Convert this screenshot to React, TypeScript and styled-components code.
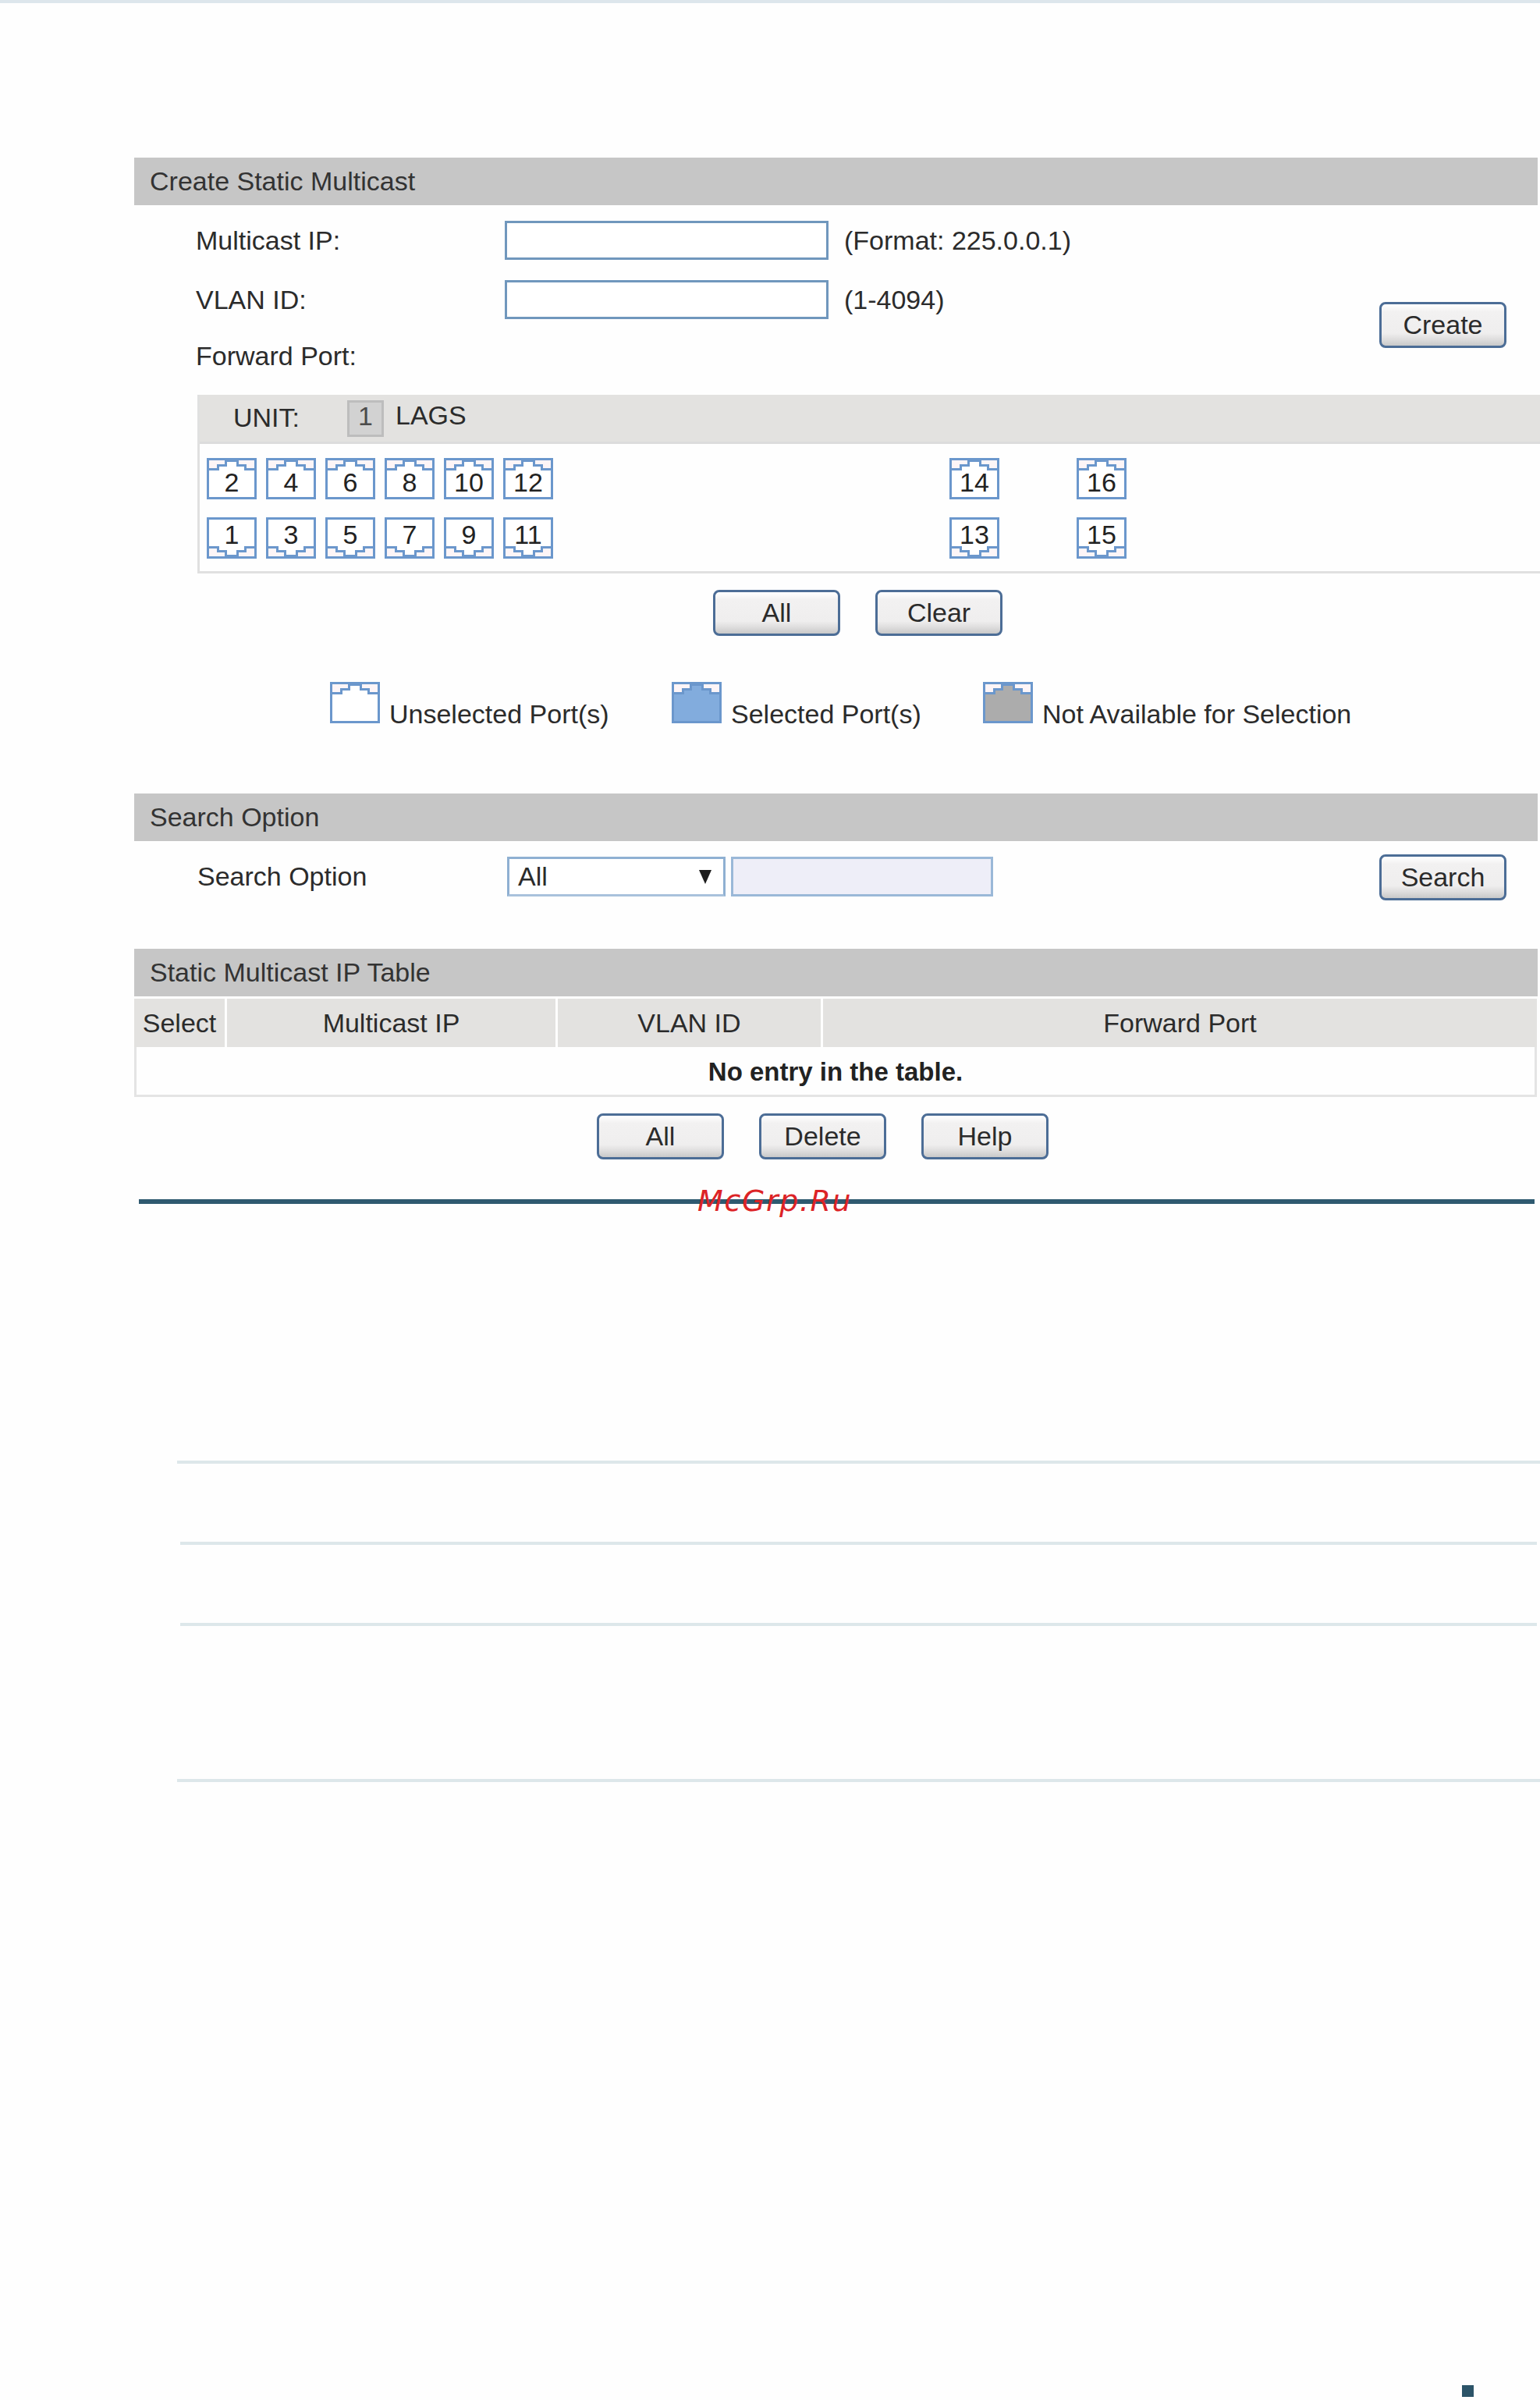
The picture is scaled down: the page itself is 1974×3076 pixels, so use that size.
import * as React from 'react';
import styled, { createGlobalStyle } from 'styled-components';

const GlobalStyle = createGlobalStyle`
  html, body {
    margin: 0;
    padding: 0;
    background: #fefefe;
  }
  * {
    box-sizing: border-box;
  }
`;

const textColor = '#2b2b2b';
const portBlue = '#6b97cc';

const Page = styled.div`
  position: relative;
  width: 1974px;
  height: 3076px;
  display: flex;
  flex-direction: column;
  overflow: hidden;
  font-family: "Liberation Sans", Arial, sans-serif;
  font-size: 34px;
  color: ${textColor};
  background: #fefefe;
`;

const TopStrip = styled.div`
  height: 4px;
  background: #dde6ec;
`;

const Content = styled.div`
  display: flex;
  flex-direction: column;
  margin-left: 172px;
`;

const SectionBar = styled.div<{ $top: number }>`
  width: 1799px;
  height: 61px;
  margin-top: ${p => p.$top}px;
  padding-left: 20px;
  display: flex;
  align-items: center;
  background: #c6c6c6;
  color: #333;
`;

const CreateForm = styled.div`
  display: flex;
  padding: 20px 43px 0 79px;
`;

const FormFields = styled.div`
  display: flex;
  flex-direction: column;
  gap: 26px;
`;

const FormRow = styled.div<{ $height?: number }>`
  display: flex;
  align-items: center;
  height: ${p => p.$height || 50}px;
`;

const FieldLabel = styled.div`
  width: 396px;
`;

const TextField = styled.input<{ $width?: number }>`
  width: ${p => p.$width || 415}px;
  height: 50px;
  padding: 0;
  border: 3px solid #7097bd;
  background: #fff;
  outline: 0;
`;

const FieldNote = styled.div`
  margin-left: 20px;
`;

const FormButton = styled.button<{ $top?: number }>`
  flex: none;
  width: 163px;
  height: 59px;
  margin-top: ${p => p.$top || 0}px;
  padding: 0;
  border: 3px solid #4c6d96;
  border-radius: 8px;
  background: linear-gradient(#ffffff, #f2f1f1 18%, #efeeee 70%, #dedddd 85%, #c9c9c9);
  font: inherit;
  color: ${textColor};
`;

const CreateAction = styled(FormButton)`
  margin-left: auto;
`;

const PortPanel = styled.div`
  width: 1721px;
  height: 229px;
  margin: 29px 0 0 81px;
  border: solid #e0e0e0;
  border-width: 0 0 3px 3px;
`;

const UnitBar = styled.div`
  height: 63px;
  display: flex;
  align-items: center;
  padding-left: 43px;
  background: #e3e2e0;
  border-bottom: 3px solid #dcdcdc;
`;

const UnitLabel = styled.div`
  width: 146px;
  padding-bottom: 2px;
`;

const UnitTab = styled.div`
  width: 47px;
  height: 47px;
  display: flex;
  align-items: center;
  justify-content: center;
  margin-right: 15px;
  padding-bottom: 5px;
  background: #d2d2d2;
  border: 3px solid #bdbdbd;
  color: #4c4c4c;
`;

const LagsLink = styled.span`
  padding-bottom: 7px;
`;

const PortBody = styled.div`
  display: flex;
  padding: 18px 0 0 9px;
`;

const PortGroup = styled.div<{ $columns: number; $gap: number; $left?: number }>`
  display: grid;
  grid-template-columns: repeat(${p => p.$columns}, 64px);
  column-gap: ${p => p.$gap}px;
  row-gap: 23px;
  margin-left: ${p => p.$left || 0}px;
`;

const PortBox = styled.div`
  position: relative;
  width: 64px;
  height: 53px;
  display: flex;
  justify-content: center;
  align-items: center;
`;

const PortNumber = styled.span<{ $flip: boolean }>`
  position: relative;
  margin-top: ${p => (p.$flip ? -10 : 9)}px;
  line-height: 1;
  font-size: 34px;
  color: #222;
`;

const PortSvg = styled.svg`
  position: absolute;
  top: 0;
  left: 0;
`;

const ActionRow = styled.div<{ $top: number; $gap: number; $left: number }>`
  display: flex;
  gap: ${p => p.$gap}px;
  margin: ${p => p.$top}px 0 0 ${p => p.$left}px;
`;

const Legend = styled.div`
  display: flex;
  margin: 59px 0 0 251px;
`;

const LegendItem = styled.div<{ $width: number }>`
  display: flex;
  width: ${p => p.$width}px;
`;

const LegendText = styled.div`
  margin: 21px 0 0 12px;
  line-height: 40px;
  white-space: nowrap;
`;

const SearchRow = styled.div`
  display: flex;
  align-items: flex-start;
  padding: 17px 43px 0 81px;
`;

const SearchLabel = styled.div`
  width: 397px;
  height: 50px;
  margin-top: 3px;
  line-height: 50px;
`;

const SelectBox = styled.div`
  width: 280px;
  height: 51px;
  margin: 3px 7px 0 0;
  display: flex;
  align-items: center;
  justify-content: space-between;
  padding: 0 15px 0 11px;
  background: #fff;
  border: 3px solid #8fb0d2;
  border-bottom-color: #a9c2dc;
`;

const SelectArrow = styled.span`
  width: 0;
  height: 0;
  border-left: 8px solid transparent;
  border-right: 8px solid transparent;
  border-top: 18px solid #1c1c1c;
`;

const SearchField = styled.input`
  width: 336px;
  height: 51px;
  margin-top: 3px;
  padding: 0;
  border: 3px solid #9ab8d8;
  background: #eeeef8;
  outline: 0;
`;

const TableHead = styled.div`
  display: grid;
  grid-template-columns: 116px 421px 337px 1fr;
  column-gap: 3px;
  width: 1798px;
  height: 62px;
  margin-top: 3px;
`;

const HeadCell = styled.div`
  display: flex;
  align-items: center;
  justify-content: center;
  background: #e3e2e0;
`;

const EmptyRow = styled.div`
  width: 1798px;
  height: 64px;
  display: flex;
  align-items: center;
  justify-content: center;
  padding-top: 2px;
  border: solid #e4e4e4;
  border-width: 0 3px 3px 3px;
  font-size: 33px;
  font-weight: 700;
  color: #222;
`;

const DarkRule = styled.div`
  width: 1789px;
  height: 6px;
  margin: 51px 0 0 6px;
  background: #2f5a70;
`;

const Watermark = styled.div`
  position: absolute;
  left: 894px;
  top: 1517px;
  font-family: "DejaVu Sans", sans-serif;
  font-style: italic;
  font-size: 38px;
  line-height: 44px;
  letter-spacing: 1.6px;
  color: #dc2326;
`;

const NoteRule = styled.div<{ $top: number; $left: number; $right: number }>`
  height: 4px;
  margin: ${p => p.$top}px ${p => p.$right}px 0 ${p => p.$left}px;
  background: #dde7ea;
`;

const PageMark = styled.div`
  width: 15px;
  height: 15px;
  margin: auto 0 4px 1874px;
  background: #2c5468;
`;

interface IPortIconProps {
  fill?: string;
  flip?: boolean;
}

// rj45 socket outline, the notch points up unless flipped
const PortIcon = ({ fill = '#ffffff', flip = false }: IPortIconProps) => (
  <PortSvg width="64" height="53" viewBox="0 0 64 53">
    <g transform={flip ? 'matrix(1 0 0 -1 0 53)' : undefined}>
      <rect x="1.5" y="1.5" width="61" height="50" fill={fill} stroke={portBlue} strokeWidth="3" />
      <path d="M3 3H23V8H13V13H3Z M41 3H61V13H51V8H41Z" fill="#fdf5f7" />
      <path
        d="M2 14.5H14.5V9.5H24.5V3.5H39.5V9.5H49.5V14.5H62"
        fill="none"
        stroke={portBlue}
        strokeWidth="3"
      />
    </g>
  </PortSvg>
);

const Port = ({ n, flip }: { n: number; flip: boolean }) => (
  <PortBox>
    <PortIcon flip={flip} />
    <PortNumber $flip={flip}>{n}</PortNumber>
  </PortBox>
);

const leftPorts = [2, 4, 6, 8, 10, 12, 1, 3, 5, 7, 9, 11];
const rightPorts = [14, 16, 13, 15];

const App = () => (
  <Page>
    <GlobalStyle />
    <TopStrip />
    <Content>
      <SectionBar $top={198}>Create Static Multicast</SectionBar>
      <CreateForm>
        <FormFields>
          <FormRow>
            <FieldLabel>Multicast IP:</FieldLabel>
            <TextField />
            <FieldNote>(Format: 225.0.0.1)</FieldNote>
          </FormRow>
          <FormRow>
            <FieldLabel>VLAN ID:</FieldLabel>
            <TextField />
            <FieldNote>(1-4094)</FieldNote>
          </FormRow>
          <FormRow $height={42}>
            <FieldLabel>Forward Port:</FieldLabel>
          </FormRow>
        </FormFields>
        <CreateAction $top={104}>Create</CreateAction>
      </CreateForm>
      <PortPanel>
        <UnitBar>
          <UnitLabel>UNIT:</UnitLabel>
          <UnitTab>1</UnitTab>
          <LagsLink>LAGS</LagsLink>
        </UnitBar>
        <PortBody>
          <PortGroup $columns={6} $gap={12}>
            {leftPorts.map((n, i) => <Port key={n} n={n} flip={i >= 6} />)}
          </PortGroup>
          <PortGroup $columns={2} $gap={99} $left={508}>
            {rightPorts.map((n, i) => <Port key={n} n={n} flip={i >= 2} />)}
          </PortGroup>
        </PortBody>
      </PortPanel>
      <ActionRow $top={21} $gap={45} $left={742}>
        <FormButton>All</FormButton>
        <FormButton>Clear</FormButton>
      </ActionRow>
      <Legend>
        <LegendItem $width={438}>
          <PortBox><PortIcon /></PortBox>
          <LegendText>Unselected Port(s)</LegendText>
        </LegendItem>
        <LegendItem $width={399}>
          <PortBox><PortIcon fill="#82acdd" /></PortBox>
          <LegendText>Selected Port(s)</LegendText>
        </LegendItem>
        <LegendItem $width={480}>
          <PortBox><PortIcon fill="#acacac" /></PortBox>
          <LegendText>Not Available for Selection</LegendText>
        </LegendItem>
      </Legend>
      <SectionBar $top={82}>Search Option</SectionBar>
      <SearchRow>
        <SearchLabel>Search Option</SearchLabel>
        <SelectBox>
          All
          <SelectArrow />
        </SelectBox>
        <SearchField />
        <CreateAction>Search</CreateAction>
      </SearchRow>
      <SectionBar $top={62}>Static Multicast IP Table</SectionBar>
      <TableHead>
        <HeadCell>Select</HeadCell>
        <HeadCell>Multicast IP</HeadCell>
        <HeadCell>VLAN ID</HeadCell>
        <HeadCell>Forward Port</HeadCell>
      </TableHead>
      <EmptyRow>No entry in the table.</EmptyRow>
      <ActionRow $top={21} $gap={45} $left={593}>
        <FormButton>All</FormButton>
        <FormButton>Delete</FormButton>
        <FormButton>Help</FormButton>
      </ActionRow>
      <DarkRule />
    </Content>
    <NoteRule $top={329} $left={227} $right={0} />
    <NoteRule $top={100} $left={231} $right={4} />
    <NoteRule $top={100} $left={231} $right={4} />
    <NoteRule $top={196} $left={227} $right={0} />
    <PageMark />
    <Watermark>McGrp.Ru</Watermark>
  </Page>
);

export default App;
